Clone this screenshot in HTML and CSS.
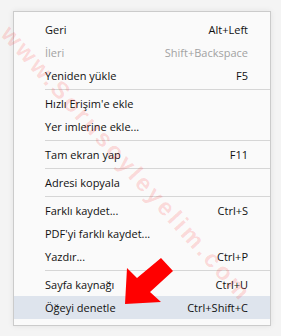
FILE: index.html
```html
<!DOCTYPE html>
<html lang="tr">
<head>
	<meta charset="UTF-8">
	<title>Sağ tık menüsü</title>
	<link rel="stylesheet" href="styles.css">
</head>
<body>
	<div class="menu">
		<div class="menu-item"><span>Geri</span><span class="key">Alt+Left</span></div>
		<div class="menu-item disabled"><span>İleri</span><span class="key">Shift+Backspace</span></div>
		<div class="menu-item"><span>Yeniden yükle</span><span class="key">F5</span></div>
		<div class="menu-sep"></div>
		<div class="menu-item"><span>Hızlı Erişim'e ekle</span></div>
		<div class="menu-item"><span>Yer imlerine ekle...</span></div>
		<div class="menu-sep"></div>
		<div class="menu-item"><span>Tam ekran yap</span><span class="key">F11</span></div>
		<div class="menu-sep"></div>
		<div class="menu-item"><span>Adresi kopyala</span></div>
		<div class="menu-sep"></div>
		<div class="menu-item"><span>Farklı kaydet...</span><span class="key">Ctrl+S</span></div>
		<div class="menu-item"><span>PDF'yi farklı kaydet...</span></div>
		<div class="menu-item"><span>Yazdır...</span><span class="key">Ctrl+P</span></div>
		<div class="menu-sep"></div>
		<div class="menu-item"><span>Sayfa kaynağı</span><span class="key">Ctrl+U</span></div>
		<div class="menu-item active"><span>Öğeyi denetle</span><span class="key">Ctrl+Shift+C</span></div>
	</div>

	<!-- filigran -->
	<div class="watermark">www.Sorusoyleyelim.com</div>

	<!-- kırmızı ok -->
	<svg class="arrow" width="60" height="60" viewBox="0 0 60 60">
		<polygon points="2,46 4,10 14,20 38,0 50,13 27,34 38,44" fill="#ff0000"/>
	</svg>
</body>
</html>
```

FILE: styles.css
```css
html, body {
    margin: 0px;
    padding: 0px;
}
body {
    width: 281px;
    height: 336px;
    background: #f4f4f4;
    position: relative;
    overflow: hidden;
    font-family: "Open Sans", "Noto Sans", sans-serif;
    font-size: 11px;
    color: #111111;
}
.menu {
    width: 256px;
    margin: 11px 0px 0px 13px;
    padding: 6px 0px 6px 0px;
    background: #fafafa;
    border: #cbcbcb solid 1px;
    box-shadow: 0px 0px 6px rgba(0, 0, 0, 0.08);
}
.menu-item {
    height: 23px;
    display: flex;
    align-items: center;
    justify-content: space-between;
    padding: 0px 22px 0px 31px;
}
.menu-item.disabled {
    color: #a2a2a2;
}
.menu-item.active {
    background: #dee4ed;
}
.menu-sep {
    height: 1px;
    margin: 2px 0px 2px 31px;
    background: #d6d6d6;
}
.watermark {
    position: absolute;
    left: 16px;
    top: 20px;
    font-family: "Liberation Sans", sans-serif;
    font-weight: bold;
    font-size: 24px;
    letter-spacing: 3px;
    color: rgba(255, 0, 0, 0.14);
    transform-origin: 0 0;
    transform: rotate(48deg);
    white-space: nowrap;
}
.arrow {
    position: absolute;
    left: 123px;
    top: 258px;
}
```
